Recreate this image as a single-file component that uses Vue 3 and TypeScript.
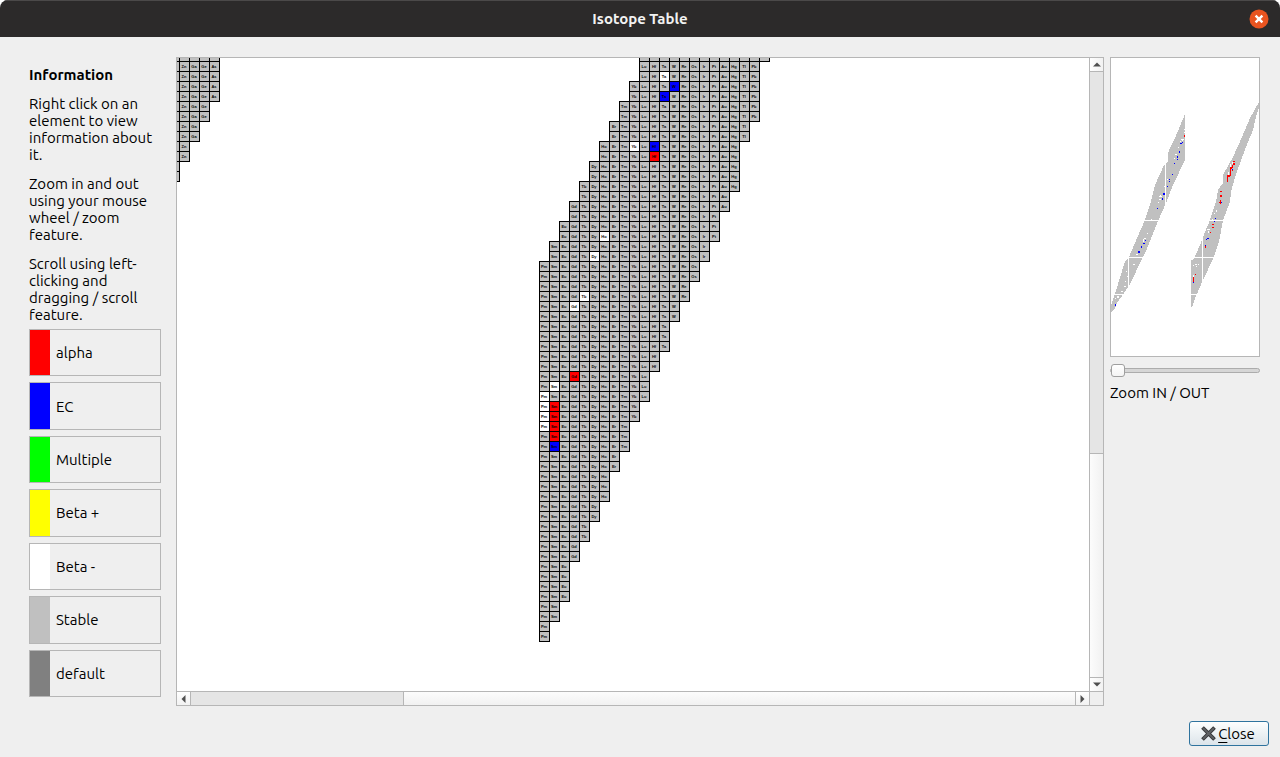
<script setup lang="ts">
import { ref } from 'vue'

type Decay = 'alpha' | 'ec' | 'multiple' | 'betaPlus' | 'betaMinus' | 'stable' | 'default'

const colors: Record<Decay, string> = {
  alpha: '#ff0000',
  ec: '#0000ff',
  multiple: '#00ff00',
  betaPlus: '#ffff00',
  betaMinus: '#ffffff',
  stable: '#c0c0c0',
  default: '#808080',
}

const legend: { label: string; kind: Decay }[] = [
  { label: 'alpha', kind: 'alpha' },
  { label: 'EC', kind: 'ec' },
  { label: 'Multiple', kind: 'multiple' },
  { label: 'Beta +', kind: 'betaPlus' },
  { label: 'Beta -', kind: 'betaMinus' },
  { label: 'Stable', kind: 'stable' },
  { label: 'default', kind: 'default' },
]

const zoom = ref(0)
const CELL = 10

const heavy = ['Pm', 'Sm', 'Eu', 'Gd', 'Tb', 'Dy', 'Ho', 'Er', 'Tm', 'Yb', 'Lu', 'Hf', 'Ta', 'W', 'Re', 'Os', 'Ir', 'Pt', 'Au', 'Hg', 'Tl', 'Pb', 'Bi']
const light = ['Cu', 'Zn', 'Ga', 'Ge', 'As']

// first and last element of every row, from the top of the view downwards
const heavySpans: [number, number][] = [
  [10, 22], [10, 21], [10, 21], [9, 21], [9, 21], [8, 21], [8, 21], [7, 20], [7, 20], [6, 19],
  [6, 19], [5, 19], [5, 19], [4, 19], [4, 18], [3, 18], [3, 17], [2, 17], [2, 17], [1, 16],
  [1, 16], [0, 15], [0, 15], [0, 14], [0, 14], [0, 13], [0, 13], [0, 12], [0, 12], [0, 12],
  [0, 11], [0, 11], [0, 10], [0, 10], [0, 10], [0, 9], [0, 9], [0, 8], [0, 8], [0, 8],
  [0, 7], [0, 7], [0, 6], [0, 6], [0, 6], [0, 5], [0, 5], [0, 4], [0, 4], [0, 3],
  [0, 3], [0, 2], [0, 2], [0, 2], [0, 2], [0, 1], [0, 1], [0, 0], [0, 0],
]
const lightSpans: [number, number][] = [
  [0, 4], [0, 4], [0, 4], [0, 4], [0, 4], [0, 3], [0, 3], [0, 2], [0, 2], [0, 1], [0, 1], [0, 0], [0, 0],
]

const decays: Record<string, Decay> = {
  '2:Ta': 'betaMinus', '3:W': 'ec', '4:Ta': 'ec', '9:Yb': 'betaMinus', '9:Hf': 'ec', '10:Hf': 'alpha',
  '18:Ho': 'betaMinus', '20:Dy': 'betaMinus', '24:Tb': 'betaMinus', '25:Gd': 'betaMinus', '32:Gd': 'alpha',
  '33:Sm': 'betaMinus', '34:Pm': 'betaMinus', '35:Pm': 'betaMinus', '35:Sm': 'alpha', '36:Pm': 'betaMinus',
  '36:Sm': 'alpha', '37:Pm': 'betaMinus', '37:Sm': 'alpha', '38:Sm': 'alpha', '39:Sm': 'ec',
}

interface Nuclide { x: number; y: number; name: string; fill: string }

function build(names: string[], spans: [number, number][], left: number): Nuclide[] {
  return spans.flatMap(([from, to], row) =>
    names.slice(from, to + 1).map((name, i) => ({
      x: left + (from + i) * CELL,
      y: row * CELL - 7,
      name,
      fill: colors[decays[`${row}:${name}`] ?? 'stable'],
    })),
  )
}

const nuclides = [...build(light, lightSpans, -8), ...build(heavy, heavySpans, 362)]
// cells cut by the edge of the view carry no symbol
const labelled = nuclides.filter((n) => n.x >= 0 && n.y >= 0)

const bands = [
  '74,56 74,102 62,127 55,145 47,163 35,193 32,199 19,226 11,238 6,245 4,250 0,255 0,247 4,236 14,203 18,199 26,180 34,162 40,143 44,127 53,107 57,103 57,97 58,92 64,80',
  '148,44 148,50 145,59 142,72 137,84 132,97 124,119 120,134 119,144 112,162 108,184 103,199 92,222 85,238 81,249 80,249 80,202 83,201 91,182 94,174 99,162 105,144 107,132 112,125 112,117 122,99 131,79 139,60',
]

type Mark = [number, number, number, number]
const marks: { fill: string; items: Mark[] }[] = [
  {
    fill: '#ffffff',
    items: [
      [54, 105, 1, 42], [0, 162, 148, 1], [0, 199, 148, 1], [17, 199, 1, 30], [0, 236, 148, 1], [91, 180, 1, 44],
      [73, 71, 1, 1], [73, 74, 1, 1], [70, 81, 3, 1], [69, 83, 1, 1], [71, 82, 1, 1], [67, 89, 1, 1], [64, 96, 2, 1],
      [63, 100, 1, 1], [56, 121, 1, 1], [48, 138, 3, 1], [48, 141, 2, 1], [49, 137, 1, 1], [47, 144, 1, 1], [53, 128, 1, 1],
      [40, 161, 1, 1], [36, 175, 1, 1], [34, 180, 1, 1], [32, 181, 1, 3], [33, 180, 1, 1], [25, 196, 2, 1], [22, 206, 2, 1],
      [15, 213, 1, 1], [16, 218, 1, 1], [14, 223, 1, 1], [13, 228, 2, 1], [10, 233, 2, 1], [6, 238, 2, 2], [8, 243, 1, 2],
      [4, 240, 1, 1], [119, 106, 1, 3], [121, 104, 1, 2], [117, 114, 1, 3], [118, 117, 1, 1], [105, 152, 1, 2],
      [103, 155, 1, 1], [101, 161, 1, 1], [96, 171, 3, 1], [97, 173, 1, 2], [84, 206, 2, 1], [87, 206, 1, 1],
      [82, 207, 1, 1], [85, 208, 1, 1], [82, 217, 1, 2],
    ],
  },
  {
    fill: '#ff0000',
    items: [
      [73, 77, 1, 2], [122, 103, 2, 1], [122, 105, 2, 2], [121, 107, 1, 3], [121, 112, 1, 1], [119, 109, 1, 9],
      [120, 109, 1, 2], [117, 117, 2, 2], [116, 117, 1, 7], [109, 133, 2, 1], [109, 137, 2, 2], [109, 142, 1, 4],
      [108, 144, 3, 1], [101, 166, 2, 1], [101, 169, 2, 1], [99, 174, 1, 1], [94, 188, 1, 2], [84, 216, 1, 1], [82, 219, 1, 5],
    ],
  },
  {
    fill: '#0000ff',
    items: [
      [69, 85, 2, 1], [71, 84, 1, 1], [68, 93, 1, 2], [66, 98, 1, 2], [66, 101, 1, 1], [63, 105, 1, 1], [61, 116, 1, 1],
      [58, 121, 1, 1], [58, 123, 1, 1], [56, 128, 1, 1], [52, 135, 2, 2], [51, 140, 1, 2], [46, 150, 1, 1], [34, 182, 1, 1],
      [32, 185, 2, 1], [30, 188, 1, 2], [27, 193, 2, 2], [4, 246, 1, 2], [121, 111, 1, 1], [110, 144, 1, 1], [104, 160, 1, 1],
      [103, 163, 1, 1], [95, 181, 1, 1], [96, 180, 2, 1], [94, 187, 1, 1], [82, 224, 1, 1],
    ],
  },
]
</script>

<template>
  <div class="window">
    <header class="titlebar">
      <h1>Isotope Table</h1>
      <button class="window-close" type="button" aria-label="Close window">
        <svg width="20" height="20" viewBox="0 0 20 20">
          <circle cx="10" cy="10" r="9.5" fill="#e95420" />
          <path d="M6.6 6.6 13.4 13.4M13.4 6.6 6.6 13.4" stroke="#fff" stroke-width="2.4" />
        </svg>
      </button>
    </header>

    <main class="content">
      <aside class="info">
        <h2>Information</h2>
        <p>Right click on an element to view information about it.</p>
        <p>Zoom in and out using your mouse wheel / zoom feature.</p>
        <p>Scroll using left-clicking and dragging / scroll feature.</p>
        <ul class="legend">
          <li v-for="item in legend" :key="item.kind">
            <span class="swatch" :style="{ background: colors[item.kind] }"></span>
            {{ item.label }}
          </li>
        </ul>
      </aside>

      <section class="viewer" aria-label="Isotopes">
        <svg class="chart" width="100%" height="100%">
          <g v-for="n in nuclides" :key="`${n.x}-${n.y}`">
            <rect :x="n.x" :y="n.y" width="11" height="11" fill="#000" />
            <rect :x="n.x + 1" :y="n.y + 1" width="9" height="9" :fill="n.fill" />
          </g>
          <text v-for="n in labelled" :key="`t${n.x}-${n.y}`" :x="n.x + 5" :y="n.y + 7">{{ n.name }}</text>
        </svg>
        <div class="scroll vertical">
          <button type="button" aria-label="Scroll up">
            <svg width="8" height="5" viewBox="0 0 8 5"><path d="M0 4.5 4 0.5 8 4.5z" /></svg>
          </button>
          <div class="groove"></div>
          <div class="thumb"></div>
          <button type="button" aria-label="Scroll down">
            <svg width="8" height="5" viewBox="0 0 8 5"><path d="M0 0.5 4 4.5 8 0.5z" /></svg>
          </button>
        </div>
        <div class="scroll horizontal">
          <button type="button" aria-label="Scroll left">
            <svg width="5" height="8" viewBox="0 0 5 8"><path d="M4.5 0 0.5 4 4.5 8z" /></svg>
          </button>
          <div class="groove"></div>
          <div class="thumb"></div>
          <button type="button" aria-label="Scroll right">
            <svg width="5" height="8" viewBox="0 0 5 8"><path d="M0.5 0 4.5 4 0.5 8z" /></svg>
          </button>
        </div>
        <div class="corner"></div>
      </section>

      <aside class="overview">
        <svg class="minimap" viewBox="0 0 148 298" role="img" aria-label="Overview">
          <polygon v-for="b in bands" :key="b" :points="b" fill="#c0c0c0" />
          <g v-for="m in marks" :key="m.fill" :fill="m.fill">
            <rect v-for="(r, i) in m.items" :key="i" :x="r[0]" :y="r[1]" :width="r[2]" :height="r[3]" />
          </g>
        </svg>
        <input id="zoom" v-model="zoom" type="range" min="0" max="100" />
        <label for="zoom">Zoom IN / OUT</label>
      </aside>
    </main>

    <footer class="actions">
      <button class="close" type="button">
        <svg width="15" height="15" viewBox="0 0 16 16">
          <path d="M3 3 13 13M13 3 3 13" stroke="#38393b" stroke-width="4" stroke-linecap="square" />
          <path d="M3 3 13 13M13 3 3 13" stroke="#606265" stroke-width="2" stroke-linecap="square" />
        </svg>
        <span><u>C</u>lose</span>
      </button>
    </footer>
  </div>
</template>

<style>
body {
  margin: 0;
  background: #fff;
}
</style>

<style scoped>
.window {
  display: flex;
  flex-direction: column;
  height: 100vh;
  box-sizing: border-box;
  overflow: hidden;
  border-radius: 8px 8px 0 0;
  background: #efefef;
  color: #000;
  font: 15px/17px Ubuntu, "Noto Sans", "Open Sans", sans-serif;
}
.titlebar {
  display: grid;
  grid-template-columns: 1fr auto 1fr;
  align-items: center;
  height: 37px;
  flex: none;
  box-sizing: border-box;
  padding: 0 11px;
  background: #2c2a2a;
  box-shadow: inset 0 1px #4b4949;
}
.titlebar h1 {
  grid-column: 2;
  margin: 0;
  color: #f2f2f2;
  font-size: 15px;
  font-weight: bold;
}
.window-close {
  justify-self: end;
  display: flex;
  padding: 0;
  border: 0;
  background: none;
}
.content {
  display: flex;
  flex: 1;
  min-height: 0;
  padding: 20px 20px 15px 29px;
}
.info {
  display: flex;
  flex-direction: column;
  flex: none;
  width: 132px;
  box-sizing: border-box;
  padding: 9px 0;
  margin-right: 15px;
}
.info h2,
.info p {
  margin: 0 0 12px;
  font-size: 15px;
}
.info p:last-of-type {
  margin-bottom: 6px;
}
.legend {
  display: flex;
  flex: 1;
  flex-direction: column;
  gap: 6px;
  margin: 0;
  padding: 0;
  list-style: none;
}
.legend li {
  display: flex;
  flex: 1;
  align-items: center;
  gap: 6px;
  border: 1px solid #b6b6b6;
}
.swatch {
  align-self: stretch;
  width: 20px;
}
.viewer {
  display: grid;
  flex: 1;
  min-width: 0;
  grid-template: minmax(0, 1fr) 14px / minmax(0, 1fr) 14px;
  border: 1px solid #b6b6b6;
  background: #fff;
}
.chart {
  display: block;
  overflow: hidden;
  shape-rendering: crispEdges;
}
.chart text {
  font: bold 4px "Liberation Sans", sans-serif;
  text-anchor: middle;
}
.scroll {
  display: flex;
}
.vertical {
  flex-direction: column;
  border-left: 1px solid #b6b6b6;
}
.horizontal {
  border-top: 1px solid #b6b6b6;
}
.scroll button {
  display: flex;
  flex: none;
  align-items: center;
  justify-content: center;
  width: 13px;
  height: 13px;
  padding: 0;
  border: 0;
  background: linear-gradient(90deg, #fff, #f2f2f2);
}
.horizontal button {
  background: linear-gradient(#fff, #f2f2f2);
}
.scroll path {
  fill: #505050;
}
.groove {
  flex: none;
  box-sizing: border-box;
  border: solid #b6b6b6;
  background: #e5e5e5;
}
.thumb {
  flex: 1;
}
.vertical .groove {
  height: calc(60% + 3px);
  border-width: 1px 0;
}
.vertical .thumb {
  border-bottom: 1px solid #b6b6b6;
  background: linear-gradient(90deg, #fcfcfc, #f1f1f1);
}
.horizontal .groove {
  width: calc(23% + 4px);
  border-width: 0 1px;
}
.horizontal .thumb {
  border-right: 1px solid #b6b6b6;
  background: linear-gradient(#fcfcfc, #f1f1f1);
}
.corner {
  border: solid #b6b6b6;
  border-width: 1px 0 0 1px;
  background: #efefef;
}
.overview {
  display: flex;
  flex: none;
  flex-direction: column;
  width: 150px;
  margin-left: 6px;
}
.minimap {
  display: block;
  border: 1px solid #b6b6b6;
  background: #fff;
  shape-rendering: crispEdges;
}
.overview input {
  appearance: none;
  height: 14px;
  margin: 6px 0 7px;
  background: none;
}
.overview input::-webkit-slider-runnable-track {
  height: 5px;
  box-sizing: border-box;
  border: 1px solid #acacac;
  border-radius: 3px;
  background: #d6d6d6;
}
.overview input::-webkit-slider-thumb {
  appearance: none;
  width: 14px;
  height: 13px;
  box-sizing: border-box;
  margin-top: -5px;
  border: 1px solid #9f9f9f;
  border-radius: 3px;
  background: linear-gradient(#fff, #f4f4f4);
}
.actions {
  display: flex;
  justify-content: flex-end;
  padding: 0 11px 11px;
}
.close {
  display: flex;
  align-items: center;
  justify-content: center;
  gap: 2px;
  width: 80px;
  height: 25px;
  padding: 0 2px 0 0;
  border: 1px solid #2f739e;
  border-radius: 3px;
  background: linear-gradient(#fdfefe, #dce4ea);
  color: #000;
  font: inherit;
}
.close u {
  text-underline-offset: 3px;
}
</style>
